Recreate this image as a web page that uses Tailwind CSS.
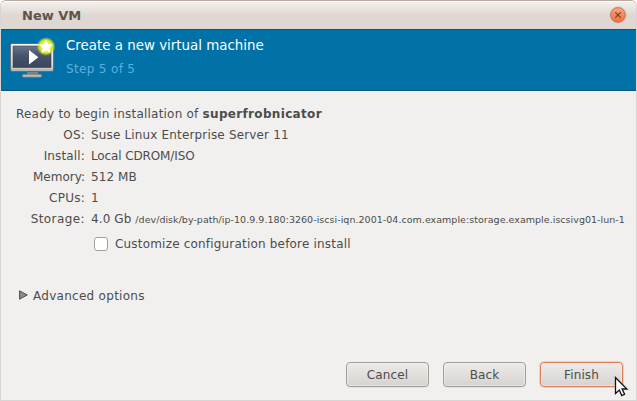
<!DOCTYPE html>
<html lang="en">
<head>
<meta charset="utf-8">
<title>New VM</title>
<script src="https://cdn.jsdelivr.net/npm/@tailwindcss/browser@4"></script>
</head>
<body class="w-[637px] h-[401px] overflow-hidden bg-white font-['DejaVu_Sans',sans-serif] text-[12px] text-[#4c4c4c]">
<div class="relative w-[637px] h-[401px] flex flex-col rounded-t-[6px] overflow-hidden border border-[#d8d6d4] border-t-[#b9aba1] bg-[#f1f0ee]">
  <header class="h-7 shrink-0 flex items-center justify-between pl-[21px] pr-[9px] border-t border-t-white bg-linear-to-b from-[#f3f0ed] to-[#dfd7d1] to-50%">
    <h1 class="font-bold text-[13px] leading-4 text-[#5c544b] whitespace-nowrap">New VM</h1>
    <svg class="w-[18px] h-[18px] -mt-[2px]" viewBox="0 0 18 18">
      <defs><linearGradient id="close" x2="0" y2="1"><stop stop-color="#fca57d"/><stop offset="1" stop-color="#f26d38"/></linearGradient></defs>
      <circle cx="9" cy="9" r="8.4" fill="#c9bfb7"/>
      <circle cx="9" cy="9" r="7.3" fill="url(#close)" stroke="#c66f4b" stroke-width=".8"/>
      <path d="M6.3 6.3l5.4 5.4M11.7 6.3l-5.4 5.4" stroke="#693c28" stroke-width="1.1"/>
    </svg>
  </header>
  <section class="h-[62px] shrink-0 flex pl-[9px] bg-[#0072a8] border-y border-[#075779]">
    <svg class="w-[46px] h-[44px] mt-[6px] shrink-0" viewBox="0 0 46 44">
      <defs>
        <linearGradient id="frame" x2="0" y2="1"><stop stop-color="#fff"/><stop offset=".8" stop-color="#dcdcdc"/><stop offset="1" stop-color="#aaa"/></linearGradient>
        <linearGradient id="screen" x2="0" y2="1"><stop stop-color="#69758a"/><stop offset=".45" stop-color="#47536a"/><stop offset="1" stop-color="#3b465c"/></linearGradient>
        <radialGradient id="glow"><stop offset=".3" stop-color="#f7f84c"/><stop offset=".7" stop-color="#d5e51f"/><stop offset="1" stop-color="#b3d62a" stop-opacity="0"/></radialGradient>
      </defs>
      <path d="M17 35h11v5H17z" fill="#858585"/>
      <rect x="12.5" y="38.2" width="19" height="3" rx="1" fill="#bdbdbd" stroke="#6d6d6d" stroke-width=".8"/>
      <rect x=".6" y="7.5" width="43" height="28" rx="1.5" fill="url(#frame)" stroke="#6a6a6a"/>
      <rect x="3" y="10" width="38" height="21.5" fill="url(#screen)" stroke="#36425a" stroke-width=".6"/>
      <path d="M19 14v14.4l9.4-7.2z" fill="#fff"/>
      <circle cx="36" cy="10.5" r="9.5" fill="url(#glow)"/>
      <path d="M36 3.4l2.1 4.6 4.9.6-3.6 3.4 1 4.9-4.4-2.4-4.4 2.4 1-4.9L29 8.6l4.9-.6z" fill="#fff"/>
    </svg>
    <div class="pl-[10px] pt-[7px]">
      <h2 class="text-[13.4px] leading-[18px] text-white whitespace-nowrap">Create a new virtual machine</h2>
      <p class="mt-[6px] text-[12px] tracking-[0.34px] leading-4 text-[#5caee0]">Step 5 of 5</p>
    </div>
  </section>
  <main class="grow pl-[15px] pt-[13px]">
    <p class="leading-[21px] tracking-[0.22px] whitespace-nowrap">Ready to begin installation of <b class="tracking-[0.33px]">superfrobnicator</b></p>
    <dl class="grid grid-cols-[69px_1fr] gap-x-[6px] leading-[21px] whitespace-nowrap">
      <dt class="text-right tracking-[0.2px]">OS:</dt><dd class="tracking-[0.16px]">Suse Linux Enterprise Server 11</dd>
      <dt class="text-right tracking-[0.15px]">Install:</dt><dd class="tracking-[-0.12px]">Local CDROM/ISO</dd>
      <dt class="text-right">Memory:</dt><dd class="tracking-[0.1px]">512 MB</dd>
      <dt class="text-right tracking-[0.25px]">CPUs:</dt><dd>1</dd>
      <dt class="text-right tracking-[0.42px]">Storage:</dt><dd class="h-[21px]"><span class="tracking-[0.1px]">4.0 Gb </span><span class="text-[9.5px] tracking-[0.03px]">/dev/disk/by-path/ip-10.9.9.180:3260-iscsi-iqn.2001-04.com.example:storage.example.iscsivg01-lun-1</span></dd>
    </dl>
    <div class="flex items-center h-[21px] mt-[3px] pl-[78px] gap-[7px]">
      <span class="w-[14px] h-[14px] rounded-[3px] border border-[#a79f97] bg-white"></span><span class="tracking-[0.19px]">Customize configuration before install</span>
    </div>
    <div class="flex items-center h-[21px] mt-[31px] pl-[3px] gap-[5px]">
      <svg class="w-[9px] h-[10px] -mt-[2px]" viewBox="0 0 9 10"><path d="M.6.8v8.4L8.2 5z" fill="#8c8c8c" stroke="#4c4c4c"/></svg><span class="tracking-[0.28px]">Advanced options</span>
    </div>
  </main>
  <footer class="flex gap-[14px] justify-end pr-[13px] pb-[13px] text-center leading-[24px] tracking-[0.15px]">
    <div class="w-[83px] h-[25px] rounded-[4px] border border-[#a39d98] bg-linear-to-b from-[#edebe9] to-[#d6d2cf] shadow-[inset_0_0_0_1px_#f2f0ee99,0_1px_0_#e5e3e1]">Cancel</div>
    <div class="w-[83px] h-[25px] rounded-[4px] border border-[#a39d98] bg-linear-to-b from-[#edebe9] to-[#d6d2cf] shadow-[inset_0_0_0_1px_#f2f0ee99,0_1px_0_#e5e3e1]">Back</div>
    <div class="w-[83px] h-[25px] rounded-[4px] border border-[#e07e5a] bg-linear-to-b from-[#edebe9] to-[#d6d2cf] shadow-[inset_0_0_0_1px_#f2f0ee99,0_0_0_1px_#efb39c88]">Finish</div>
  </footer>
  <svg class="absolute left-[613px] top-[375px] w-[15px] h-[22px]" viewBox="0 0 15 22"><path d="M1.5 1.5v16l3.8-3.4 2.5 5.5 2.8-1.3-2.5-5.3h4.8z" fill="#fff" stroke="#111" stroke-width="1.3"/></svg>
</div>
</body>
</html>
